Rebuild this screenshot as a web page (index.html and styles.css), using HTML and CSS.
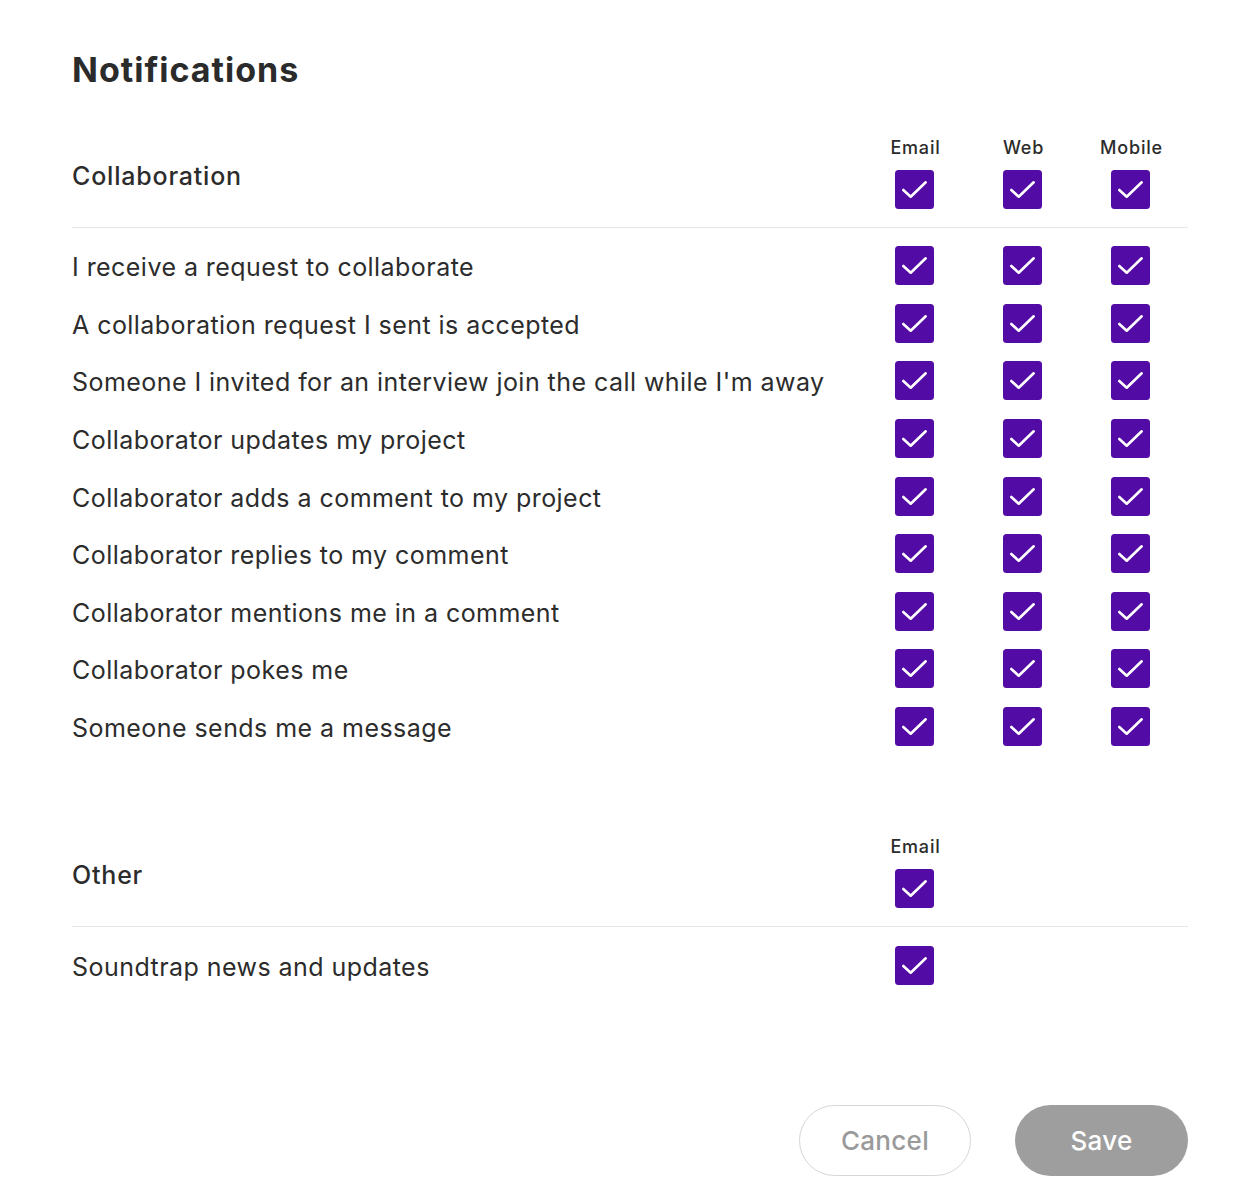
FILE: index.html
```html
<!DOCTYPE html>
<html lang="en">
<head>
<meta charset="utf-8">
<title>Notifications</title>
<link rel="stylesheet" href="styles.css">
</head>
<body>
<div class="page">
  <h1 class="title">Notifications</h1>

  <section class="group">
    <div class="grid head">
      <h2 class="group-title">Collaboration</h2>
      <div class="col"><span class="col-label">Email</span><span class="cb"><svg viewBox="0 0 39 39"><rect width="39" height="39" rx="3.5"/><path d="M8.3 20 L15.7 26.7 L30.7 12.3"/></svg></span></div>
      <div class="col"><span class="col-label">Web</span><span class="cb"><svg viewBox="0 0 39 39"><rect width="39" height="39" rx="3.5"/><path d="M8.3 20 L15.7 26.7 L30.7 12.3"/></svg></span></div>
      <div class="col"><span class="col-label">Mobile</span><span class="cb"><svg viewBox="0 0 39 39"><rect width="39" height="39" rx="3.5"/><path d="M8.3 20 L15.7 26.7 L30.7 12.3"/></svg></span></div>
    </div>
    <div class="rows" id="collab-rows"></div>
  </section>

  <section class="group group-other">
    <div class="grid head">
      <h2 class="group-title">Other</h2>
      <div class="col"><span class="col-label">Email</span><span class="cb"><svg viewBox="0 0 39 39"><rect width="39" height="39" rx="3.5"/><path d="M8.3 20 L15.7 26.7 L30.7 12.3"/></svg></span></div>
    </div>
    <div class="rows">
      <div class="grid row">
        <span class="row-label">Soundtrap news and updates</span>
        <div class="col"><span class="cb"><svg viewBox="0 0 39 39"><rect width="39" height="39" rx="3.5"/><path d="M8.3 20 L15.7 26.7 L30.7 12.3"/></svg></span></div>
      </div>
    </div>
  </section>

  <div class="actions">
    <button class="btn btn-cancel" type="button">Cancel</button>
    <button class="btn btn-save" type="button">Save</button>
  </div>
</div>
<script>
  var items = [
    "I receive a request to collaborate",
    "A collaboration request I sent is accepted",
    "Someone I invited for an interview join the call while I'm away",
    "Collaborator updates my project",
    "Collaborator adds a comment to my project",
    "Collaborator replies to my comment",
    "Collaborator mentions me in a comment",
    "Collaborator pokes me",
    "Someone sends me a message"
  ];
  var cb = '<span class="cb"><svg viewBox="0 0 39 39"><rect width="39" height="39" rx="3.5"/><path d="M8.3 20 L15.7 26.7 L30.7 12.3"/></svg></span>';
  var html = "";
  items.forEach(function (t) {
    html += '<div class="grid row"><span class="row-label">' + t + '</span>' +
      '<div class="col">' + cb + '</div><div class="col">' + cb + '</div><div class="col">' + cb + '</div></div>';
  });
  document.getElementById("collab-rows").innerHTML = html;
</script>
</body>
</html>
```

FILE: styles.css
```css
* { box-sizing: border-box; }
html, body { margin: 0; padding: 0; background: #ffffff; }
body {
  font-family: "Inter", "Lato", "Liberation Sans", sans-serif;
  color: #2c2c2c;
}
.page {
  width: 1188px;
  padding-left: 72px;
  padding-top: 48px;
}
.title {
  margin: 0;
  font-size: 34px;
  line-height: 44px;
  font-weight: 700;
  letter-spacing: 1px;
  color: #2b2b2b;
}
.group { margin-top: 45px; }
.group-other { margin-top: 81px; }
.grid {
  display: grid;
  grid-template-columns: 1fr 108px 108px 108px;
  padding-right: 4px;
  align-items: center;
}
.head {
  padding-bottom: 18px;
  border-bottom: 1px solid #e6e6e6;
}
.group-title {
  margin: 0;
  font-size: 25px;
  line-height: 30px;
  font-weight: 500;
  letter-spacing: 0.8px;
  padding-top: 5px;
}
.col {
  display: flex;
  flex-direction: column;
  align-items: center;
}
.col-label {
  font-size: 18px;
  line-height: 22px;
  font-weight: 500;
  letter-spacing: 0.8px;
  margin-bottom: 11px;
  padding-left: 3px;
}
.cb { display: block; width: 39px; height: 39px; }
.cb svg { display: block; width: 39px; height: 39px; }
.cb rect { fill: #520ba4; }
.cb path {
  fill: none;
  stroke: #ffffff;
  stroke-width: 2.6;
  stroke-linecap: round;
  stroke-linejoin: round;
}
.rows { padding-top: 9px; }
.row { height: 57.6px; }
.row-label {
  font-size: 25px;
  line-height: 30px;
  font-weight: 400;
  letter-spacing: 0.45px;
  padding-top: 3px;
}
.actions {
  display: flex;
  justify-content: flex-end;
  gap: 44px;
  margin-top: 111px;
}
.btn {
  height: 71px;
  border-radius: 36px;
  font-family: inherit;
  font-size: 26px;
  font-weight: 500;
  letter-spacing: 0.3px;
  cursor: pointer;
}
.btn-cancel {
  width: 172px;
  background: #ffffff;
  border: 1px solid #d6d6d6;
  color: #9a9a9a;
}
.btn-save {
  width: 173px;
  background: #9e9e9e;
  border: none;
  color: #ffffff;
  font-weight: 500;
}
```
